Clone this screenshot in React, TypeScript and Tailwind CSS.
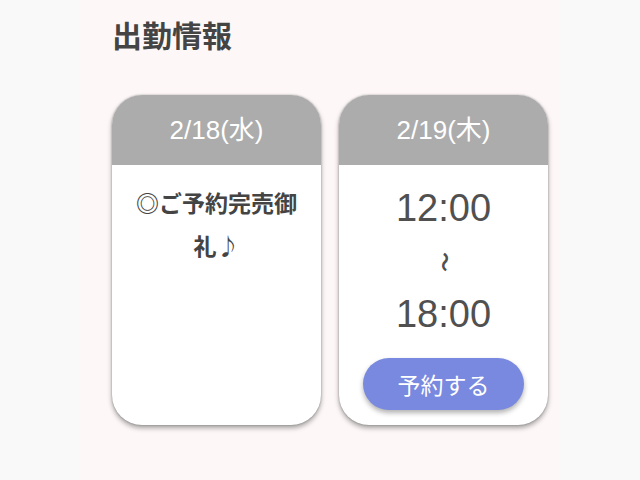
const shifts = [
  { date: '2/18(水)', soldOut: true },
  { date: '2/19(木)', soldOut: false, start: '12:00', end: '18:00' },
];

function ShiftCard({ date, soldOut, start, end }: { date: string; soldOut: boolean; start?: string; end?: string }) {
  return (
    <div className="flex h-[330px] w-[209px] shrink-0 flex-col overflow-hidden rounded-[30px] bg-white shadow-[0_3px_5px_rgba(0,0,0,0.35),0_0_2px_rgba(0,0,0,0.3)]">
      <div className="flex h-[70px] shrink-0 items-center justify-center bg-[#acacac] text-[26px] text-white">{date}</div>
      {soldOut ? (
        <p className="px-[18px] pt-[16px] text-center font-['Noto_Sans_CJK_JP',sans-serif] text-[23px] font-bold leading-[43px] text-[#444]">
          ◎ご予約完売御礼♪
        </p>
      ) : (
        <div className="flex flex-1 flex-col items-center pb-[15px] text-[#505050]">
          <div className="mt-[20px] text-[38px] leading-[46px]">{start}</div>
          <div className="mt-[21px] rotate-90 text-[20px] font-bold leading-[20px]">〜</div>
          <div className="mt-[19px] text-[38px] leading-[46px]">{end}</div>
          <button className="mt-auto h-[52px] w-[161px] rounded-full bg-[#7889df] font-['Noto_Sans_CJK_JP',sans-serif] text-[23px] text-white shadow-[0_3px_5px_rgba(0,0,0,0.3)]">
            予約する
          </button>
        </div>
      )}
    </div>
  );
}

export default function App() {
  return (
    <div className="flex min-h-[480px] justify-center bg-[#f9f9f9] font-['Liberation_Sans','Noto_Sans_CJK_JP',sans-serif]">
      <div className="w-[480px] bg-[#fdf8f7] pl-[32px] pr-[12px] pt-[13px]">
        <h1 className="font-['Noto_Sans_CJK_JP',sans-serif] text-[30px] font-bold leading-[42px] text-[#444]">出勤情報</h1>
        <div className="mt-[40px] flex gap-[18px]">
          {shifts.map((s) => (
            <ShiftCard key={s.date} {...s} />
          ))}
        </div>
      </div>
    </div>
  );
}
